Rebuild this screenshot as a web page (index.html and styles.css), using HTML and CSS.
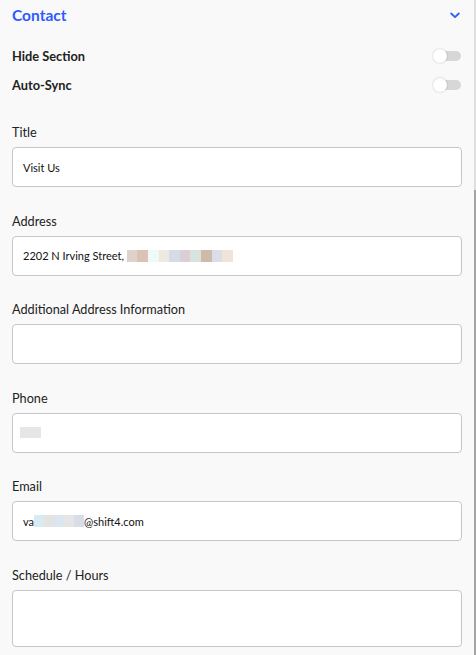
FILE: index.html
```html
<!DOCTYPE html>
<html>
<head>
<meta charset="utf-8">
<link rel="stylesheet" href="styles.css">
</head>
<body>
<div class="page">
  <main class="panel">
    <header class="head">
      <span class="title">Contact</span>
      <svg class="chev" width="10" height="7" viewBox="0 0 10 7"><path d="M1.2 1.5 L5 5.2 L8.8 1.5" fill="none" stroke="#2d5bff" stroke-width="1.8" stroke-linecap="round" stroke-linejoin="round"/></svg>
    </header>
    <div class="toggles">
      <div class="trow"><span class="tlabel">Hide Section</span><span class="switch"><span class="knob"></span></span></div>
      <div class="trow"><span class="tlabel">Auto-Sync</span><span class="switch"><span class="knob"></span></span></div>
    </div>
    <div class="field">
      <label class="lbl">Title</label>
      <div class="input">Visit Us</div>
    </div>
    <div class="field">
      <label class="lbl">Address</label>
      <div class="input">2202 N Irving Street,&nbsp;<span class="blur"><i class="a1"></i><i class="a2"></i><i class="a3"></i><i class="a4"></i><i class="a5"></i><i class="a6"></i><i class="a7"></i><i class="a8"></i><i class="a9"></i><i class="a10"></i></span></div>
    </div>
    <div class="field">
      <label class="lbl">Additional Address Information</label>
      <div class="input"></div>
    </div>
    <div class="field">
      <label class="lbl">Phone</label>
      <div class="input"><span class="blur phone"><i class="p1"></i></span></div>
    </div>
    <div class="field">
      <label class="lbl">Email</label>
      <div class="input">va<span class="blur mail"><i class="e1"></i><i class="e2"></i><i class="e3"></i><i class="e4"></i><i class="e5"></i></span>@shift4.com</div>
    </div>
    <div class="field last">
      <label class="lbl">Schedule / Hours</label>
      <div class="input area"></div>
    </div>
  </main>
  <div class="scroll"><div class="thumb"></div></div>
</div>
</body>
</html>
```
FILE: styles.css
```css
html, body {
  margin: 0;
  padding: 0;
  background: #f9f9f9;
  font-family: Lato, "Open Sans", "Liberation Sans", sans-serif;
  color: #222;
}
.page {
  display: flex;
  height: 655px;
  overflow: hidden;
}
.panel {
  flex: 1;
  padding: 0 12px;
}
.scroll {
  width: 2px;
  background: #dedede;
  display: flex;
  flex-direction: column;
}
.thumb {
  margin-top: 190px;
  flex: 1;
  background: #a3a3a3;
}
.head {
  height: 30px;
  display: flex;
  align-items: center;
  justify-content: space-between;
}
.title {
  font-size: 15.5px;
  font-weight: 700;
  color: #2d5bff;
}
.chev {
  margin-right: 2px;
  margin-top: 1px;
}
.toggles {
  margin-top: 11px;
  margin-bottom: 24px;
}
.trow {
  height: 29px;
  display: flex;
  align-items: center;
  justify-content: space-between;
}
.tlabel {
  font-size: 12.8px;
  font-weight: 700;
  color: #222;
}
.switch {
  position: relative;
  width: 24px;
  height: 10px;
  border-radius: 5px;
  background: #d7d7d7;
  margin-right: 1px;
}
.knob {
  position: absolute;
  left: -4px;
  top: -2px;
  width: 14px;
  height: 14px;
  border-radius: 50%;
  background: #fff;
  box-shadow: 0 0 2px rgba(0,0,0,0.25);
}
.field {
  margin-bottom: 24.5px;
}
.lbl {
  display: block;
  font-size: 12.7px;
  line-height: 18px;
  color: #222;
  margin-bottom: 6px;
}
.input {
  box-sizing: border-box;
  height: 40px;
  background: #fff;
  border: 1px solid #c6c6c6;
  border-radius: 4px;
  padding: 0 10px;
  display: flex;
  align-items: center;
  font-size: 11px;
  color: #111;
}
.input.area {
  height: 57px;
}
.blur {
  display: inline-flex;
  height: 12px;
}
.blur i {
  display: block;
  width: 10.6px;
  height: 12px;
}
.blur.phone { margin-left: -3px; }
.blur.phone i { width: 21px; height: 11px; }
.blur.mail i { width: 10px; }
.a1 { background: #ddd3ca; }
.a2 { background: #dcc2b5; }
.a3 { background: #eefafa; }
.a4 { background: #f1e8e3; }
.a5 { background: #d5dce7; }
.a6 { background: #dccdd6; }
.a7 { background: #d9e3de; }
.a8 { background: #cfb9a8; }
.a9 { background: #dcdde6; }
.a10 { background: #f0e4da; }
.p1 { background: #e6e6e6; }
.e1 { background: #d8ebf0; }
.e2 { background: #e3e3e1; }
.e3 { background: #dde6ee; }
.e4 { background: #e5e5e8; }
.e5 { background: #d8dde8; }
```
